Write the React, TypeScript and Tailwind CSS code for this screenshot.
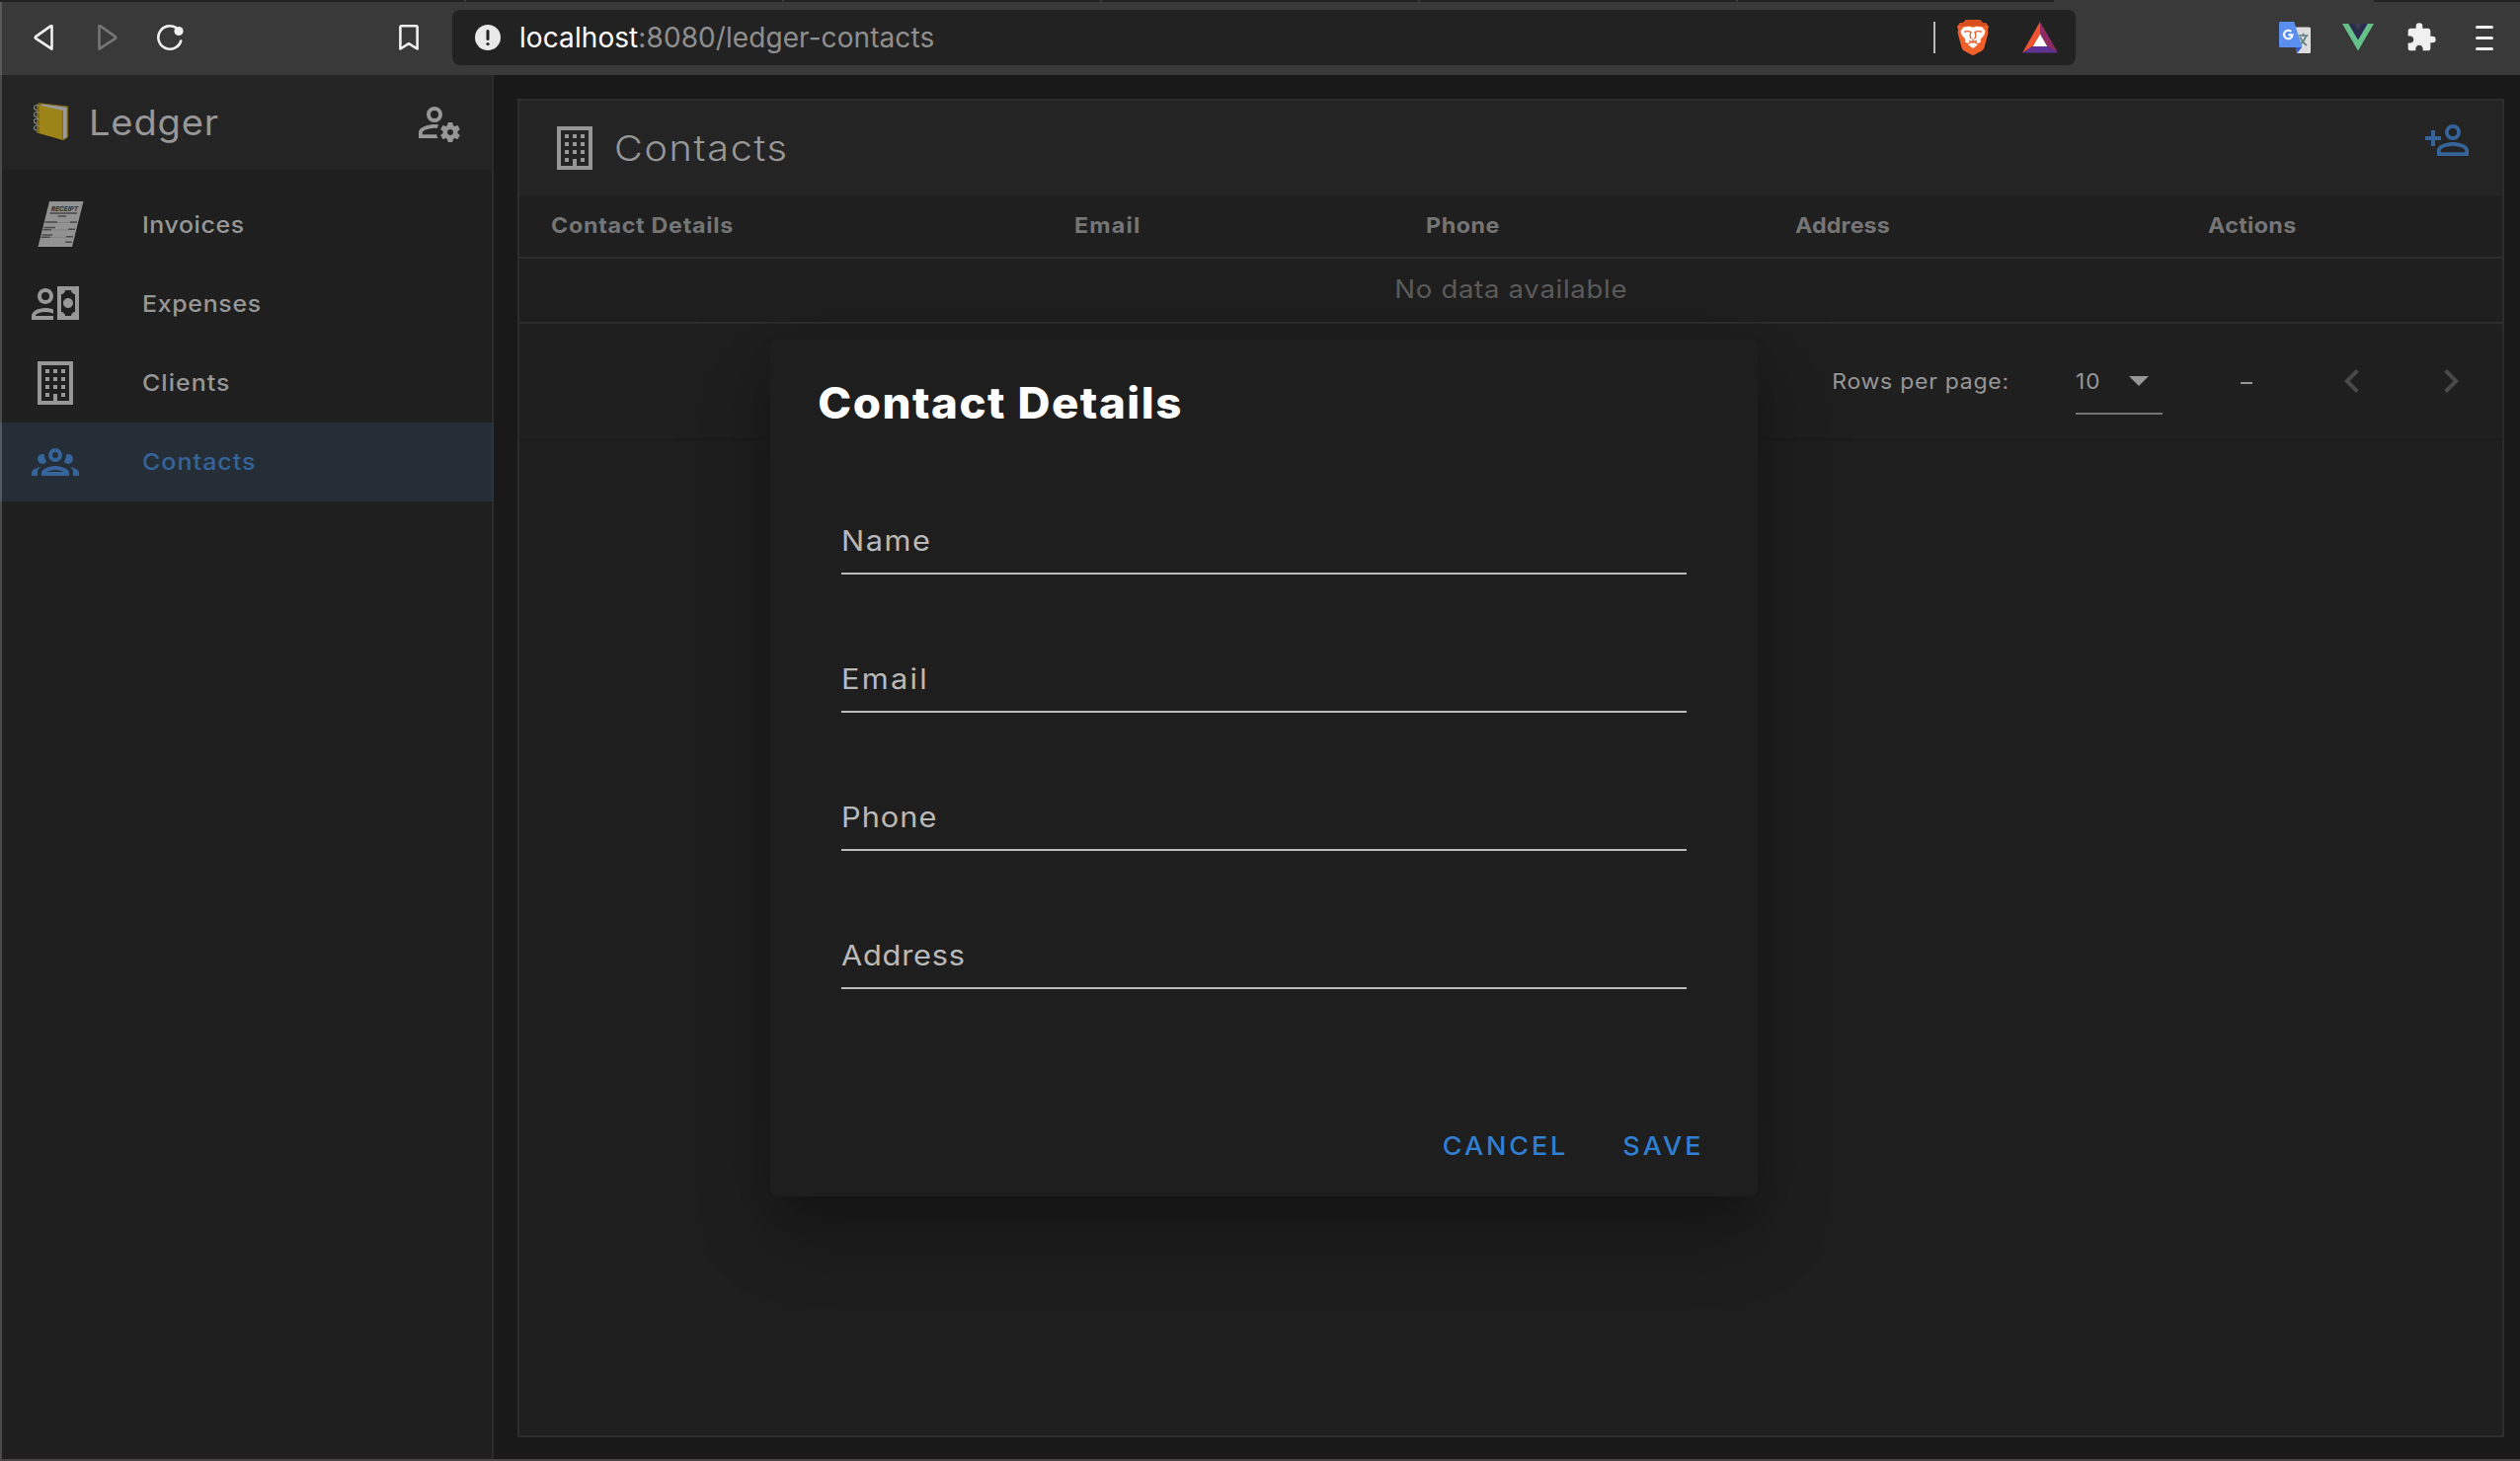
import type { ReactNode } from "react";

const paths = {
  accountCog:
    "M10 4A4 4 0 0 0 6 8A4 4 0 0 0 10 12A4 4 0 0 0 14 8A4 4 0 0 0 10 4M10 6A2 2 0 0 1 12 8A2 2 0 0 1 10 10A2 2 0 0 1 8 8A2 2 0 0 1 10 6M17 12C16.84 12 16.76 12.08 16.76 12.24L16.5 13.5C16.28 13.68 15.96 13.84 15.72 14L14.44 13.5C14.36 13.5 14.2 13.5 14.12 13.6L13.16 15.36C13.08 15.44 13.08 15.6 13.24 15.68L14.28 16.5V17.5L13.24 18.32C13.16 18.4 13.08 18.56 13.16 18.64L14.12 20.4C14.2 20.5 14.36 20.5 14.44 20.5L15.72 20C15.96 20.16 16.28 20.32 16.5 20.5L16.76 21.76C16.76 21.92 16.84 22 17 22H19C19.08 22 19.24 21.92 19.24 21.76L19.4 20.5C19.72 20.32 20.04 20.16 20.28 20L21.5 20.5C21.64 20.5 21.8 20.5 21.8 20.4L22.84 18.64C22.92 18.56 22.84 18.4 22.76 18.32L21.72 17.5V16.5L22.76 15.68C22.84 15.6 22.92 15.44 22.84 15.36L21.8 13.6C21.8 13.5 21.64 13.5 21.5 13.5L20.28 14C20.04 13.84 19.72 13.68 19.4 13.5L19.24 12.24C19.24 12.08 19.08 12 18.92 12H17M10 13C7.33 13 2 14.33 2 17V20H11.67C11.39 19.41 11.19 18.77 11.09 18.1H3.9V17C3.9 16.36 7.03 14.9 10 14.9C10.43 14.9 10.87 14.94 11.3 15C11.5 14.36 11.77 13.76 12.12 13.21C11.34 13.08 10.6 13 10 13M18.04 15.5C18.84 15.5 19.5 16.16 19.5 17.04C19.5 17.84 18.84 18.5 18.04 18.5C17.16 18.5 16.5 17.84 16.5 17.04C16.5 16.16 17.16 15.5 18.04 15.5Z",
  building:
    "M3 1V23H21V1H3M5 3H19V21H13V17.5H11V21H5V3M7 5H9V7H7ZM11 5H13V7H11ZM15 5H17V7H15ZM7 9H9V11H7ZM11 9H13V11H11ZM15 9H17V11H15ZM7 13H9V15H7ZM11 13H13V15H11ZM15 13H17V15H15ZM7 17H9V19H7ZM15 17H17V19H15Z",
  accountCash:
    "M11 8C11 10.21 9.21 12 7 12C4.79 12 3 10.21 3 8C3 5.79 4.79 4 7 4C9.21 4 11 5.79 11 8M9 8A2 2 0 1 0 5 8A2 2 0 1 0 9 8M11 14.72V20H0V18C0 15.79 3.13 14 7 14C8.5 14 9.87 14.27 11 14.72M2 18H11V16.83C10 16.4 8.6 16 7 16C4.24 16 2 16.9 2 18M24 20H13V3H24V20M16 11.5C16 12.88 17.12 14 18.5 14C19.88 14 21 12.88 21 11.5C21 10.12 19.88 9 18.5 9C17.12 9 16 10.12 16 11.5M22 7C20.9 7 20 6.11 20 5H17C17 6.11 16.11 7 15 7V16C16.11 16 17 16.9 17 18H20C20 16.9 20.9 16 22 16V7Z",
  accountGroup:
    "M12 5A3.5 3.5 0 0 0 8.5 8.5A3.5 3.5 0 0 0 12 12A3.5 3.5 0 0 0 15.5 8.5A3.5 3.5 0 0 0 12 5M12 7A1.5 1.5 0 0 1 13.5 8.5A1.5 1.5 0 0 1 12 10A1.5 1.5 0 0 1 10.5 8.5A1.5 1.5 0 0 1 12 7M5.5 8A2.5 2.5 0 0 0 3 10.5C3 11.44 3.53 12.25 4.29 12.68C4.65 12.88 5.06 13 5.5 13C5.94 13 6.35 12.88 6.71 12.68C7.08 12.47 7.39 12.17 7.62 11.81C6.89 10.86 6.5 9.7 6.5 8.5C6.5 8.41 6.5 8.31 6.5 8.22C6.2 8.08 5.86 8 5.5 8M18.5 8C18.14 8 17.8 8.08 17.5 8.22C17.5 8.31 17.5 8.41 17.5 8.5C17.5 9.7 17.11 10.86 16.38 11.81C16.5 12 16.63 12.15 16.78 12.3C16.94 12.45 17.1 12.58 17.29 12.68C17.65 12.88 18.06 13 18.5 13C18.94 13 19.35 12.88 19.71 12.68C20.47 12.25 21 11.44 21 10.5A2.5 2.5 0 0 0 18.5 8M12 14C9.66 14 5 15.17 5 17.5V19H19V17.5C19 15.17 14.34 14 12 14M4.71 14.55C2.78 14.78 0 15.76 0 17.5V19H3V17.07C3 16.06 3.69 15.22 4.71 14.55M19.29 14.55C20.31 15.22 21 16.06 21 17.07V19H24V17.5C24 15.76 21.22 14.78 19.29 14.55M12 16C13.53 16 15.24 16.5 16.23 17H7.77C8.76 16.5 10.47 16 12 16Z",
  accountPlus:
    "M15 4A4 4 0 0 0 11 8A4 4 0 0 0 15 12A4 4 0 0 0 19 8A4 4 0 0 0 15 4M15 5.9C16.16 5.9 17.1 6.84 17.1 8C17.1 9.16 16.16 10.1 15 10.1A2.1 2.1 0 0 1 12.9 8A2.1 2.1 0 0 1 15 5.9M4 7V10H1V12H4V15H6V12H9V10H6V7H4M15 13C12.33 13 7 14.33 7 17V20H23V17C23 14.33 17.67 13 15 13M15 14.9C17.97 14.9 21.1 16.36 21.1 17V18.1H8.9V17C8.9 16.36 12 14.9 15 14.9Z",
  puzzle:
    "M20.5 11H19V7C19 5.89 18.1 5 17 5H13V3.5A2.5 2.5 0 0 0 10.5 1A2.5 2.5 0 0 0 8 3.5V5H4A2 2 0 0 0 2 7V10.8H3.5C5 10.8 6.2 12 6.2 13.5C6.2 15 5 16.2 3.5 16.2H2V20A2 2 0 0 0 4 22H7.8V20.5C7.8 19 9 17.8 10.5 17.8C12 17.8 13.2 19 13.2 20.5V22H17A2 2 0 0 0 19 20V16H20.5A2.5 2.5 0 0 0 23 13.5A2.5 2.5 0 0 0 20.5 11Z",
  chevronLeft: "M15.41 16.58L10.83 12L15.41 7.41L14 6L8 12L14 18L15.41 16.58Z",
  chevronRight: "M8.59 16.58L13.17 12L8.59 7.41L10 6L16 12L10 18L8.59 16.58Z",
};

function Icon({ d, className = "size-12" }: { d: string; className?: string }) {
  return (
    <svg viewBox="0 0 24 24" className={`${className} shrink-0`} fill="currentColor" fillRule="evenodd">
      <path d={d} />
    </svg>
  );
}

function BraveLion() {
  return (
    <svg viewBox="0 0 32 36" className="h-9 w-8 shrink-0">
      <path
        fill="#f0602b"
        d="M9 0H23L26.5 3.5 29 3 32 7 31 10 31.5 13 27.5 28Q27 30 25 31.5L17.5 35.5Q16 36.3 14.5 35.5L7 31.5Q5 30 4.5 28L.5 13 1 10 0 7 3 3 5.5 3.5Z"
      />
      <path fill="#d94e1f" d="M9 0H23L26.5 3.5 29 3 31 5.8 26 6.6 20 5.8 16 6.8 12 5.8 6 6.6 1 5.8 3 3 5.5 3.5Z" />
      <path
        fill="#fff"
        d="M6.5 7.5L12 6.8 16 7.8 20 6.8 25.5 7.5 28.5 11.5 27.3 15.5 23.5 20 24 22.5 21 24 17.5 21.8H14.5L11 24 8 22.5 8.5 20 4.7 15.5 3.5 11.5Z"
      />
      <path fill="#fff" d="M16 22.6L21 25.3 16 29 11 25.3Z" />
      <path
        fill="none"
        stroke="#e8592a"
        strokeWidth="1.3"
        d="M7 12.2Q11 10.8 14 12.5L13 16 14.3 19.5M25 12.2Q21 10.8 18 12.5L19 16 17.7 19.5M12 21.4L16 23 20 21.4M16 19.5V23"
      />
    </svg>
  );
}

function BatTriangle() {
  return (
    <svg viewBox="0 0 36 32" className="h-8 w-9 shrink-0">
      <path fill="#f0532f" d="M18 0V12.5L10.5 25 0 31.5Z" />
      <path fill="#8f2b62" d="M18 0V12.5L25.5 25 36 31.5Z" />
      <path fill="#5f3393" d="M0 31.5L10.5 25H25.5L36 31.5Z" />
      <path fill="#fff" d="M18 12.5L25.3 25H10.7Z" />
    </svg>
  );
}

function TranslateIcon() {
  return (
    <svg viewBox="0 0 32 32" className="size-8 shrink-0">
      <path fill="#dcdcdc" d="M13 5.5H30.5Q32 5.5 32 7V30.5Q32 32 30.5 32H18Z" />
      <path fill="#3759c4" d="M16.5 26H23L18.2 32Z" />
      <path fill="none" stroke="#607d86" strokeWidth="1.7" d="M19.5 14H29.5M24.5 11.8V14M27.3 14Q26 20 19.5 24M21.5 15.5Q23 20.5 28 24" />
      <path fill="#5a8ff0" d="M1.5 0H15.3L23.5 26H1.5Q0 26 0 24.5V1.5Q0 0 1.5 0Z" />
      <path fill="none" stroke="#fff" strokeWidth="2.1" d="M12.3 9.9A4.3 4.3 0 1 0 13.6 13.4H9.4" />
    </svg>
  );
}

function VueLogo() {
  return (
    <svg viewBox="0 0 32 28" className="h-7 w-8 shrink-0">
      <path fill="#66c08a" d="M0 0H7L16 15.5 25 0H32L16 27.5Z" />
      <path fill="#2b2a4f" d="M6.3 0H12.2L16 6.5 19.8 0H25.7L16 16.5Z" />
      <path fill="#3a3d50" d="M12.2 0H19.8L16 6.5Z" />
    </svg>
  );
}

function Notebook() {
  return (
    <svg viewBox="0 0 36 40" className="h-10 w-9 shrink-0">
      <path fill="#7d6812" d="M4 1L35 4.5V36L30 39.5Z" />
      <path fill="#97999f" d="M7 2.2L33.6 5.8V36L30 38Z" />
      <path fill="#9c8418" d="M3.500 2.500L8 4 29.800 9V39L3.500 31.500Z" />
      <path fill="#7f6a11" d="M3.500 2.500L6 3.300V32.200L3.500 31.500ZM28.800 8.800L29.800 9V39L28.800 38.700Z" />
      <path
        fill="none"
        stroke="#8b8b85"
        strokeWidth="1.200"
        d="M5.500 4.500A2.800 2.400 0 1 0 3.500 8.300M5.500 11.500A2.800 2.400 0 1 0 3.500 15.300M5.500 18.300A2.800 2.400 0 1 0 3.500 22M5.500 25A2.800 2.400 0 1 0 3.500 28.800"
      />
    </svg>
  );
}

function Receipt() {
  return (
    <svg viewBox="0 0 48 48" className="size-12 shrink-0 overflow-visible">
      <path fill="#929292" d="M12 1L46.5 1 35 47H.5Z" />
      <text
        transform="translate(13.5 10.8) skewX(-12)"
        fontFamily="Inter, sans-serif"
        fontSize="7"
        fontWeight="800"
        textLength="27"
        lengthAdjust="spacingAndGlyphs"
        fill="#363636"
      >
        RECEIPT
      </text>
      <path stroke="#5a5a5a" strokeWidth="2" d="M12.5 13H40" />
      <path
        stroke="#4a4a4a"
        strokeWidth="1.4"
        d="M20.5 16H29M7.5 22H20M33 22H40M6.5 27.5H18M5.5 29.7H14M31 29.3H38M4.5 35H15M3.5 37.3H13M29 36.8H36M28 42.3H35"
      />
      <path stroke="#707070" strokeWidth=".8" strokeDasharray="1 .6" d="M20 22.5H33M15 29.9H31M14 37.4H29" />
    </svg>
  );
}

function BrowserBar() {
  return (
    <header className="shrink-0">
      <div className="flex h-0.5 bg-[#222222] pl-[470px]">
        {[0, 1, 2, 3, 4].map((tab) => (
          <div key={tab} className="w-[322px] border-l-2 border-[#3a3a3a]" />
        ))}
        <div className="w-[324px] bg-[#3a3a3a]" />
      </div>
      <div className="flex h-[74px] items-center border-l-2 border-[#5a5a5a] bg-[#393939] pb-0.5 text-[#f0f0f0]">
        <svg viewBox="0 0 20 28" className="ml-8 h-7 w-5 shrink-0" fill="none" stroke="currentColor" strokeWidth="2.6" strokeLinejoin="round">
          <path d="M18.5 2.4V25.6L2.2 14.9Q1.2 14 2.2 13.1L17 2.6Z" />
        </svg>
        <svg viewBox="0 0 20 28" className="ml-[45px] h-7 w-5 shrink-0 text-[#757575]" fill="none" stroke="currentColor" strokeWidth="2.6" strokeLinejoin="round">
          <path d="M1.5 2.4V25.6L17.8 14.9Q18.8 14 17.8 13.1L3 2.6Z" />
        </svg>
        <svg viewBox="0 0 28 28" className="ml-[39px] size-7 shrink-0" fill="none" stroke="currentColor" strokeWidth="2.6" strokeLinecap="round">
          <path d="M20.5 4.2A11.7 11.7 0 1 0 25.2 17.5" />
          <circle cx="23" cy="7.5" r="4.6" fill="currentColor" stroke="none" />
        </svg>
        <svg viewBox="0 0 20 28" className="ml-[218px] h-7 w-5 shrink-0" fill="none" stroke="currentColor" strokeWidth="2.6" strokeLinejoin="round">
          <path d="M1.4 3.5Q1.4 2.3 2.6 2.3H17.4Q18.6 2.3 18.6 3.5V25.5L10 20.2 1.4 25.5Z" />
        </svg>
        <div className="ml-[34px] flex h-14 w-[1644px] items-center rounded-lg bg-[#222222]">
          <svg viewBox="0 0 26 26" className="ml-[23px] size-[26px] shrink-0">
            <circle cx="13" cy="13" r="13" fill="#e9e9e9" />
            <rect x="11.5" y="5" width="3" height="11" rx="1.5" fill="#222" />
            <circle cx="13" cy="19.5" r="1.6" fill="#222" />
          </svg>
          <div className="ml-[19px] flex-1 whitespace-nowrap text-[28px] leading-[56px] tracking-[0.08px] text-[#8f8f8f]">
            <span className="text-white">localhost</span>:8080/ledger-contacts
          </div>
          <div className="mr-[22px] h-8 w-0.5 bg-[#b9b9b9]" />
          <BraveLion />
          <div className="mr-[18px] ml-[34px]">
            <BatTriangle />
          </div>
        </div>
        <div className="ml-auto flex items-center">
          <TranslateIcon />
          <div className="ml-8">
            <VueLogo />
          </div>
          <div className="ml-8">
            <Icon d={paths.puzzle} className="size-8" />
          </div>
          <div className="mr-[27px] ml-[39px] flex w-[18px] flex-col gap-2">
            <div className="h-[3px] rounded-full bg-[#f0f0f0]" />
            <div className="h-[3px] rounded-full bg-[#f0f0f0]" />
            <div className="h-[3px] rounded-full bg-[#f0f0f0]" />
          </div>
        </div>
      </div>
    </header>
  );
}

function NavItem({ icon, label, className = "", tracking }: { icon: ReactNode; label: string; className?: string; tracking: string }) {
  return (
    <li className={`flex h-20 items-center pl-[30px] text-[23.5px] font-medium ${className}`}>
      <div className="w-28">{icon}</div>
      <span className={`origin-left scale-x-106 ${tracking}`}>{label}</span>
    </li>
  );
}

function Sidebar() {
  return (
    <aside className="flex w-[500px] shrink-0 flex-col border-r-2 border-l-2 border-r-[#2b2b2b] border-l-[#4b4b4b] bg-[#1f1f1f] text-[#979797]">
      <div className="flex h-24 items-center bg-[#242424] pr-[30px] pl-8">
        <div className="pb-0.5">
          <Notebook />
        </div>
        <h1 className="ml-5 origin-left scale-x-106 text-4xl leading-none tracking-[0.75px]">Ledger</h1>
        <div className="ml-auto">
          <Icon d={paths.accountCog} />
        </div>
      </div>
      <ul className="pt-4">
        <NavItem
          icon={
            <div className="pb-0.5 pl-1.5">
              <Receipt />
            </div>
          }
          label="Invoices"
          tracking="tracking-[0.55px]"
        />
        <NavItem icon={<Icon d={paths.accountCash} />} label="Expenses" tracking="tracking-[0.65px]" />
        <NavItem icon={<Icon d={paths.building} />} label="Clients" tracking="tracking-[1px]" />
        <NavItem
          icon={<Icon d={paths.accountGroup} />}
          label="Contacts"
          tracking="tracking-[1px]"
          className="-mx-0.5 border-x-2 border-r-[#2b3742] border-l-[#4f5a64] bg-[#252e37] text-[#35639a]"
        />
      </ul>
    </aside>
  );
}

function HeaderCell({ label, tracking }: { label: string; tracking: string }) {
  return (
    <div className="flex pl-8">
      <span className={`origin-left scale-x-106 ${tracking}`}>{label}</span>
    </div>
  );
}

function ContactsCard() {
  return (
    <section className="flex flex-1 flex-col border-2 border-[#2d2d2d] bg-[#1f1f1f]">
      <div className="flex h-24 shrink-0 items-center bg-[#242424] pr-8 pl-8 text-[#979797]">
        <Icon d={paths.building} />
        <h2 className="ml-4 origin-left scale-x-110 text-4xl leading-none font-light tracking-[1.5px]">Contacts</h2>
        <div className="mb-4 ml-auto text-[#35639a]">
          <Icon d={paths.accountPlus} />
        </div>
      </div>
      <div className="grid h-16 shrink-0 grid-cols-[530px_356px_374px_418px_1fr] items-center border-b-2 border-[#2d2d2d] pb-0.5 text-[22px] font-bold text-[#757575]">
        <HeaderCell label="Contact Details" tracking="tracking-[0.65px]" />
        <HeaderCell label="Email" tracking="tracking-[1.1px]" />
        <HeaderCell label="Phone" tracking="tracking-[0.5px]" />
        <HeaderCell label="Address" tracking="tracking-[0.1px]" />
        <HeaderCell label="Actions" tracking="tracking-[0.3px]" />
      </div>
      <div className="flex h-[66px] shrink-0 items-center justify-center border-b-2 border-[#2d2d2d] pb-0.5 text-[25.5px] text-[#5c5c5c]">
        <span className="scale-x-108 tracking-[0.65px]">No data available</span>
      </div>
      <div className="flex h-[116px] shrink-0 items-center justify-end pr-7 text-[21.5px] text-[#979797] shadow-[0_2px_3px_rgba(0,0,0,0.15)]">
        <span className="origin-right scale-x-107 tracking-[0.68px]">Rows per page:</span>
        <div className="mt-0.5 ml-[67px] flex h-[66px] w-[88px] items-center border-b-2 border-[#757575]">
          <span className="w-[54px] origin-left scale-x-105 tracking-[1px]">10</span>
          <svg viewBox="0 0 20 10" className="h-2.5 w-5">
            <path d="M0 0H20L10 10Z" fill="currentColor" />
          </svg>
        </div>
        <span className="mr-[77px] ml-[79px] h-0.5 w-3 translate-y-0.5 bg-[#979797]" />
        <div className="flex gap-[52px] text-[#4a4a4a]">
          <Icon d={paths.chevronLeft} />
          <Icon d={paths.chevronRight} />
        </div>
      </div>
    </section>
  );
}

function Field({ label, tracking }: { label: string; tracking: string }) {
  return (
    <label className="flex h-[140px] items-end border-b-2 border-[#bcbcbc] pb-3 text-[28.5px] leading-10 text-[#b9b9b9]">
      <span className={`origin-left scale-x-108 ${tracking}`}>{label}</span>
    </label>
  );
}

function ContactDialog() {
  return (
    <div
      role="dialog"
      className="absolute top-[344px] left-[780px] flex h-[868px] w-[1000px] flex-col rounded-lg bg-[#1e1e1e] shadow-[0_22px_30px_-14px_rgba(0,0,0,0.2),0_48px_76px_6px_rgba(0,0,0,0.14),0_18px_92px_16px_rgba(0,0,0,0.12)]"
    >
      <h3 className="h-[98px] shrink-0 origin-left scale-x-105 pt-8 pl-[46px] text-[43.5px] leading-[64px] font-extrabold tracking-[1.4px] text-white">
        Contact Details
      </h3>
      <div className="mx-[72px]">
        <Field label="Name" tracking="tracking-[1.4px]" />
        <Field label="Email" tracking="tracking-[2.1px]" />
        <Field label="Phone" tracking="tracking-[0.9px]" />
        <Field label="Address" tracking="tracking-[0.7px]" />
      </div>
      <div className="flex flex-1 items-end justify-end gap-[60px] pr-[54px] pb-[31px] text-[25.5px] leading-10 font-medium text-[#307fd2]">
        <button className="origin-right scale-x-106 tracking-[2.7px]">CANCEL</button>
        <button className="origin-right scale-x-106 tracking-[2.9px]">SAVE</button>
      </div>
    </div>
  );
}

export default function App() {
  return (
    <div className="relative flex h-[1480px] w-[2552px] flex-col overflow-hidden border-b-2 border-[#474345] bg-[#191919] font-[Inter,sans-serif]">
      <BrowserBar />
      <div className="flex min-h-0 flex-1">
        <Sidebar />
        <main className="flex flex-1 px-6 pt-6 pr-4 pb-[22px]">
          <ContactsCard />
        </main>
      </div>
      <ContactDialog />
    </div>
  );
}
